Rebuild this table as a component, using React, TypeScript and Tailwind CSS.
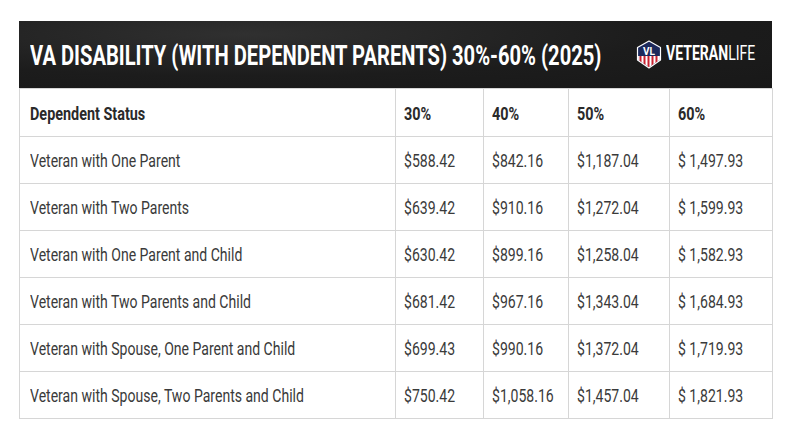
import React from "react";

const rows = [
  ["Veteran with One Parent", "$588.42", "$842.16", "$1,187.04", "$ 1,497.93"],
  ["Veteran with Two Parents", "$639.42", "$910.16", "$1,272.04", "$ 1,599.93"],
  ["Veteran with One Parent and Child", "$630.42", "$899.16", "$1,258.04", "$ 1,582.93"],
  ["Veteran with Two Parents and Child", "$681.42", "$967.16", "$1,343.04", "$ 1,684.93"],
  ["Veteran with Spouse, One Parent and Child", "$699.43", "$990.16", "$1,372.04", "$ 1,719.93"],
  ["Veteran with Spouse, Two Parents and Child", "$750.42", "$1,058.16", "$1,457.04", "$ 1,821.93"],
];

const headers = ["Dependent Status", "30%", "40%", "50%", "60%"];

function Logo() {
  return (
    <div className="flex items-center w-[131px]">
      <svg width="26" height="29" viewBox="0 0 26 29" className="shrink-0">
        <path d="M13 1 L24.5 7.5 L24.5 20 L13 28 L1.5 20 L1.5 7.5 Z" fill="#1d2a5c" stroke="#fff" strokeWidth="1.2" strokeLinejoin="round" />
        <clipPath id="lower">
          <path d="M2.1 16 L23.9 16 L23.9 19.7 L13 27.3 L2.1 19.7 Z" />
        </clipPath>
        <g clipPath="url(#lower)">
          <rect x="0" y="16" width="26" height="13" fill="#fff" />
          <rect x="3.5" y="16" width="2" height="13" fill="#c8202f" />
          <rect x="7.5" y="16" width="2" height="13" fill="#c8202f" />
          <rect x="11.5" y="16" width="2" height="13" fill="#c8202f" />
          <rect x="15.5" y="16" width="2" height="13" fill="#c8202f" />
          <rect x="19.5" y="16" width="2" height="13" fill="#c8202f" />
        </g>
        <text x="13" y="14.5" textAnchor="middle" fontSize="10" fontWeight="700" fill="#fff" fontFamily="Roboto, sans-serif">VL</text>
      </svg>
      <div className="w-[100px] shrink-0 pl-[4px] overflow-visible">
        <span className="inline-block origin-left scale-x-[0.72] whitespace-nowrap text-[19.5px] leading-none text-white">
          <span className="font-bold">VETERAN</span>
          <span className="font-normal">LIFE</span>
        </span>
      </div>
    </div>
  );
}

export default function App() {
  return (
    <div className="w-[800px] h-[442px] bg-white pt-[21px] pl-[19px] font-['Roboto',sans-serif]">
      <div className="w-[753px]">
        <div className="h-[67px] bg-[#1e1e1e] bg-[radial-gradient(ellipse_at_30%_20%,#303030_0%,#1c1c1c_55%,#181818_100%)] flex items-center pl-[11px]">
          <h1 className="flex-1 min-w-0 whitespace-nowrap text-white text-[28px] font-bold leading-none pt-[2px]">
            <span className="inline-block origin-left scale-x-[0.72]">VA DISABILITY (WITH DEPENDENT PARENTS) 30%-60% (2025)</span>
          </h1>
          <div className="shrink-0 pr-[5px]">
            <Logo />
          </div>
        </div>
        <table className="border-collapse w-[753px] table-fixed text-[#2a2a2a]">
          <colgroup>
            <col className="w-[376px]" />
            <col className="w-[88px]" />
            <col className="w-[85px]" />
            <col className="w-[101px]" />
            <col className="w-[103px]" />
          </colgroup>
          <thead>
            <tr className="h-[48px]">
              {headers.map((h, i) => (
                <th
                  key={h}
                  className={`border border-[#d6d6d6] text-left font-bold text-[18px] pt-[2px] overflow-hidden ${i === 0 ? "pl-[10px]" : "pl-[8px]"}`}
                >
                  <span className="inline-block origin-left scale-x-[0.8] whitespace-nowrap">{h}</span>
                </th>
              ))}
            </tr>
          </thead>
          <tbody>
            {rows.map((r) => (
              <tr key={r[0]} className="h-[47px]">
                {r.map((c, i) => (
                  <td
                    key={i}
                    className={`border border-[#d6d6d6] text-[18px] font-normal pt-[1px] text-[#3a3a3a] overflow-hidden ${i === 0 ? "pl-[10px]" : "pl-[8px]"}`}
                  >
                    <span className="inline-block origin-left scale-x-[0.78] whitespace-nowrap">{c}</span>
                  </td>
                ))}
              </tr>
            ))}
          </tbody>
        </table>
      </div>
    </div>
  );
}
